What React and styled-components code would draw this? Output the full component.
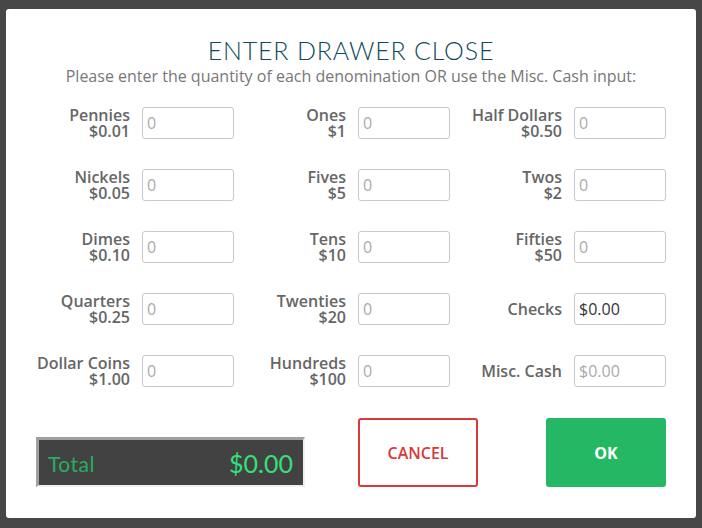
import styled, { createGlobalStyle } from "styled-components"

const GlobalStyle = createGlobalStyle`
  html, body {
    margin: 0;
    padding: 0;
    background: #474747;
  }
`

const Backdrop = styled.div`
  width: 702px;
  height: 528px;
  box-sizing: border-box;
  padding: 9px 6px 10px 6px;
  background: #474747;
`

const Card = styled.div`
  width: 690px;
  height: 509px;
  box-sizing: border-box;
  background: #fff;
  border-radius: 3px;
  display: flex;
  flex-direction: column;
  padding-top: 26px;
`

const Title = styled.h1`
  margin: 0;
  text-align: center;
  font-family: 'Lato', sans-serif;
  font-weight: 300;
  font-size: 25px;
  letter-spacing: 0.8px;
  line-height: 30px;
  color: #12495a;
`

const Subtitle = styled.p`
  margin: 1px 0 0;
  text-align: center;
  font-family: 'Open Sans', sans-serif;
  font-size: 16px;
  line-height: 20px;
  color: #777;
`

const Grid = styled.div`
  display: grid;
  grid-template-columns: repeat(3, 216px);
  grid-auto-flow: column;
  grid-template-rows: repeat(5, 32px);
  row-gap: 30px;
  padding-left: 12px;
  margin-top: 21px;
`

const Cell = styled.div`
  display: flex;
  align-items: center;
  justify-content: flex-end;
  gap: 12px;
`

const Label = styled.div`
  text-align: right;
  font-family: 'Open Sans', sans-serif;
  font-weight: 600;
  font-size: 16px;
  line-height: 16px;
  color: #666;
`

const Field = styled.input`
  width: 92px;
  height: 32px;
  box-sizing: border-box;
  border: 1px solid #c8c8c8;
  border-radius: 3px;
  padding: 0 4px;
  font-family: 'Open Sans', sans-serif;
  font-size: 16px;
  color: #333;
  outline: none;

  &::placeholder {
    color: #aaa;
  }
`

const Footer = styled.div`
  display: flex;
  align-items: flex-end;
  margin-top: 31px;
  padding-left: 30px;
`

const TotalBox = styled.div`
  width: 269px;
  height: 50px;
  box-sizing: border-box;
  background: #424242;
  border-style: solid;
  border-width: 3px 2px 2px 3px;
  border-color: #a0a0a0 #f0f0f0 #f0f0f0 #a0a0a0;
  display: flex;
  align-items: center;
  justify-content: space-between;
  padding: 0 10px 0 9px;
  font-family: 'Lato', sans-serif;
`

const TotalLabel = styled.span`
  font-size: 21px;
  letter-spacing: 0.5px;
  color: #27ae60;
  padding-top: 2px;
`

const TotalValue = styled.span`
  font-size: 25px;
  color: #33e07a;
`

const Button = styled.button`
  width: 120px;
  height: 69px;
  margin-left: ${p => p.$gap}px;
  box-sizing: border-box;
  border-radius: 3px;
  font-family: 'Open Sans', sans-serif;
  font-weight: ${p => p.$primary ? 700 : 600};
  font-size: 16px;
  cursor: pointer;
  border: 2px solid ${p => p.$primary ? "#25b864" : "#d63a3a"};
  background: ${p => p.$primary ? "#25b864" : "#fff"};
  color: ${p => p.$primary ? "#fff" : "#d63a3a"};
`

const fields = [
  ["Pennies", "$0.01"],
  ["Nickels", "$0.05"],
  ["Dimes", "$0.10"],
  ["Quarters", "$0.25"],
  ["Dollar Coins", "$1.00"],
  ["Ones", "$1"],
  ["Fives", "$5"],
  ["Tens", "$10"],
  ["Twenties", "$20"],
  ["Hundreds", "$100"],
  ["Half Dollars", "$0.50"],
  ["Twos", "$2"],
  ["Fifties", "$50"],
  ["Checks", null, "$0.00"],
  ["Misc. Cash", null, null, "$0.00"],
]

function App() {
  return (
    <>
      <GlobalStyle />
      <Backdrop>
        <Card>
          <Title>ENTER DRAWER CLOSE</Title>
          <Subtitle>Please enter the quantity of each denomination OR use the Misc. Cash input:</Subtitle>
          <Grid>
            {fields.map(([name, value, filled, hint]) => (
              <Cell key={name}>
                <Label>
                  {name}
                  {value && <><br />{value}</>}
                </Label>
                <Field defaultValue={filled || ""} placeholder={hint || "0"} />
              </Cell>
            ))}
          </Grid>
          <Footer>
            <TotalBox>
              <TotalLabel>Total</TotalLabel>
              <TotalValue>$0.00</TotalValue>
            </TotalBox>
            <Button $gap={53}>CANCEL</Button>
            <Button $gap={68} $primary>OK</Button>
          </Footer>
        </Card>
      </Backdrop>
    </>
  )
}

export default App
